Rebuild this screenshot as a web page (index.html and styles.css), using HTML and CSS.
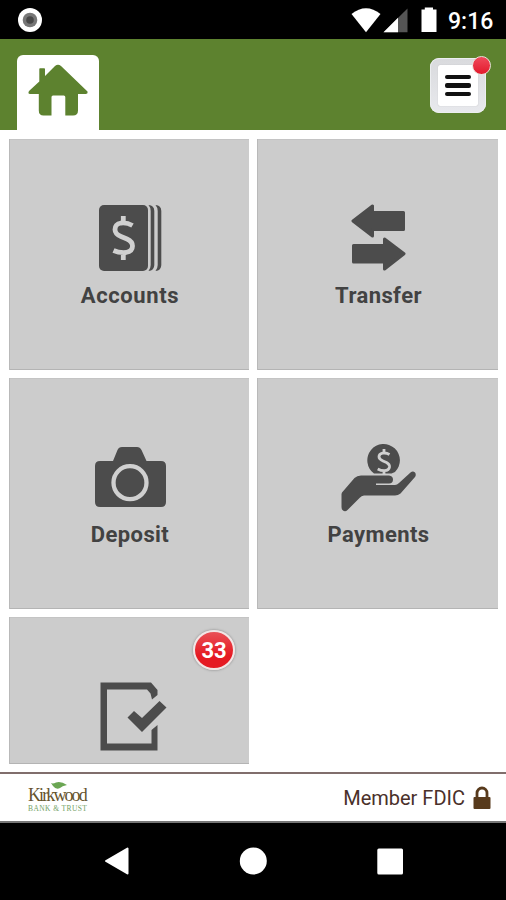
FILE: index.html
```html
<!DOCTYPE html>
<html lang="en">
<head>
<meta charset="utf-8">
<title>Kirkwood Bank &amp; Trust</title>
<link rel="stylesheet" href="styles.css">
</head>
<body>
<div class="status">
  <svg class="record" width="26" height="26" viewBox="0 0 26 26"><circle cx="13" cy="13" r="12" fill="#fff"/><circle cx="13" cy="13" r="7.3" fill="#777"/><circle cx="13" cy="13" r="3.8" fill="#484848"/></svg>
  <svg class="signals" width="90" height="30" viewBox="350 5 90 30">
    <path d="M351.5 14Q366 2.500 380.500 14L366 32.300Z" fill="#fff"/>
    <path d="M383.500 32.300L407.500 8.500V32.300Z" fill="#555"/>
    <path d="M383.500 32.300L398 17.800V32.300Z" fill="#fff"/>
    <path d="M421.500 9.500H424.800V7.500H433V9.500H436.500V32H421.500Z" fill="#fff"/>
  </svg>
  <span class="time">9:16</span>
</div>
<header class="header">
  <div class="home-tab">
    <svg width="82" height="75" viewBox="17 55 82 75"><path d="M29 91L39.300 81.500V69Q39.300 68.200 40 68.200H44.200Q45 68.200 45 69V76L55 66Q58 63.300 61 66L87.500 91.500Q88 94 85.500 94H78V110.500Q78 115.500 73 115.500H65.300V97Q65.300 95.500 63.800 95.500H53Q51.500 95.500 51.500 97V115.500H43.500Q38.800 115.500 38.800 110.500V94H30Q27.500 94 29 91Z" fill="#5d822f"/></svg>
  </div>
  <button class="menu" aria-label="Menu">
    <span class="menu-page"><i></i><i></i><i></i></span>
    <span class="dot"></span>
  </button>
</header>
<main class="grid">
  <section class="tile">
    <svg width="80" height="76" viewBox="90 199 80 76">
      <rect x="99" y="205" width="49" height="66" rx="5" fill="#4c4c4c"/>
      <path d="M148.500 205Q154.300 205.500 154.300 211V265Q154.300 270.500 148.500 271Q150.700 268.500 150.700 265V211Q150.700 207.500 148.500 205ZM155.500 205Q161.300 205.500 161.300 211V265Q161.300 270.500 155.500 271Q157.700 268.500 157.700 265V211Q157.700 207.500 155.500 205Z" fill="#4c4c4c"/>
      <path d="M132.500 225.500Q127 222.300 121 223Q115 224 115 229.500Q115 234 121 236.500L127 239Q132.500 241.500 132.500 246Q132.500 251.500 126 252.500Q119 253 113.500 250.500M123.300 216V224M123.300 252V260" fill="none" stroke="#d0d0d0" stroke-width="4.800"/>
    </svg>
    <span class="label accounts">Accounts</span>
  </section>
  <section class="tile">
    <svg width="80" height="76" viewBox="338 199 80 76">
      <path d="M353 221L372.500 206V212.500H403.500V229.500H372.500V236L353 221Z M353.500 245.500H384.500V239L404 253.700L384.500 269V262H353.500Z" fill="#4c4c4c" stroke="#4c4c4c" stroke-width="3" stroke-linejoin="round"/>
    </svg>
    <span class="label">Transfer</span>
  </section>
  <section class="tile">
    <svg width="80" height="76" viewBox="90 438 80 76">
      <path d="M100 461H113L117.500 450Q118.700 447 122 447H137Q140 447 141.500 450L146.500 461H161Q166 461 166 466V502Q166 507 161 507H100Q95 507 95 502V466Q95 461 100 461Z" fill="#4c4c4c"/>
      <circle cx="130" cy="482.700" r="16.500" fill="none" stroke="#d0d0d0" stroke-width="4.300"/>
    </svg>
    <span class="label">Deposit</span>
  </section>
  <section class="tile">
    <svg width="80" height="76" viewBox="338 437 80 76">
      <path d="M374 472.500A16.300 16.300 0 1 1 395 471L391.500 472.500Z" fill="#4c4c4c"/>
      <path d="M389.500 453.500Q386 451.500 382.500 452.200Q379 453 379 455.800Q379 458.300 383 460L386.500 461.500Q389.800 463.300 389.500 466Q389 469.500 384.500 469.700Q381 469.800 377.700 468M384 448V453M384 469V473.500" fill="none" stroke="#d0d0d0" stroke-width="2.800"/>
      <path d="M342 491.500L354.500 477Q357 474.500 361 474.500H389Q393 475 393 478.500Q393 482.500 389 482.500H376V484H395Q397 484 399 482L410.500 471.500Q413 469.500 415 471.500Q416.500 473.500 415 476L400.500 492.500Q398 494.500 395 494.500H364Q361.500 494.500 359.500 497L347.500 509Q345 511.500 342.500 509Q341.500 508 341.500 506V493Z" fill="#4c4c4c"/>
    </svg>
    <span class="label">Payments</span>
  </section>
  <section class="tile">
    <svg width="80" height="76" viewBox="90 677 80 76">
      <path d="M100.500 682.500H151L157.500 690V695L152 699.500L150.500 693.500L147 689.500H107V743.500H151.500V730L157.500 725V750.500H100.500Z" fill="#4c4c4c"/>
      <path d="M127.500 717.500L134 711L142 718L159.500 701L166.500 707.500L142 732Z" fill="#4c4c4c"/>
    </svg>
    <span class="badge">33</span>
  </section>
</main>
<footer class="footer">
  <div class="brand">
    <svg class="leaf" width="18" height="8" viewBox="0 0 18 8"><path d="M1 1Q3 2 6 .5Q11-1 17 3Q12 4 10 6Q6 8 3 4Z" fill="#6ba653"/></svg>
    <div class="brand-name">Kirkwood</div>
    <div class="brand-sub">BANK &amp; TRUST</div>
  </div>
  <div class="fdic">Member FDIC
    <svg width="18" height="24" viewBox="0 0 18 24"><path d="M4 12V7A5 5 0 0 1 14 7V12" fill="none" stroke="#583a1c" stroke-width="2.800"/><rect x=".5" y="11" width="17" height="12" rx="1" fill="#583a1c"/></svg>
  </div>
</footer>
<nav class="nav">
  <svg width="506" height="77" viewBox="0 823 506 77" fill="#fff"><path d="M106 861L127.500 848.500V873.500Z" stroke="#fff" stroke-width="2" stroke-linejoin="round"/><circle cx="253.300" cy="861" r="13.500"/><rect x="377.300" y="848.500" width="25.700" height="26" rx="1.500"/></svg>
</nav>
</body>
</html>
```

FILE: styles.css
```css
* { box-sizing: border-box; }
body {
  margin: 0;
  width: 506px;
  height: 900px;
  overflow: hidden;
  display: flex;
  flex-direction: column;
  background: #fff;
  font-family: Roboto, "Liberation Sans", sans-serif;
}
svg { display: block; flex: none; }
.status {
  flex: none;
  height: 39px;
  display: flex;
  align-items: center;
  padding: 0 12px 0 17px;
  background: #000;
  color: #fff;
}
.signals { margin-left: auto; }
.time {
  width: 46px;
  margin-left: 8px;
  padding-top: 4px;
  font-size: 23px;
  line-height: 30px;
  font-weight: 500;
  white-space: nowrap;
}
.header {
  flex: none;
  height: 91px;
  display: flex;
  justify-content: space-between;
  align-items: flex-start;
  padding: 16px 20px 0 17px;
  background: #5d822f;
}
.home-tab {
  width: 82px;
  height: 75px;
  border-radius: 6px 6px 0 0;
  background: #fff;
}
.menu {
  position: relative;
  width: 56px;
  height: 55px;
  margin: 3px 0 0;
  padding: 7px 8px;
  border: 0;
  border-radius: 9px;
  background: linear-gradient(#d9dadd, #e8e9ed);
  box-shadow: inset 0 0 0 1px #eceef0;
}
.menu-page {
  height: 41px;
  display: flex;
  flex-direction: column;
  justify-content: center;
  align-items: center;
  gap: 4px;
  border-radius: 2px;
  background: #fff;
  box-shadow: 0 0 1px #aaa;
}
.menu-page i {
  width: 26px;
  height: 4.500px;
  border-radius: 2px;
  background: #111;
}
.dot {
  position: absolute;
  top: -2px;
  right: -5px;
  width: 19px;
  height: 19px;
  border: 1.500px solid #eadfd8;
  border-radius: 50%;
  background: linear-gradient(#f04a5b, #e21a2c);
}
.grid {
  flex: none;
  height: 642px;
  display: grid;
  grid-template-columns: 240px 241px;
  grid-template-rows: 231px 231px 147px;
  gap: 8px;
  padding: 9px 8px 0 9px;
}
.tile {
  position: relative;
  overflow: hidden;
  display: flex;
  flex-direction: column;
  align-items: center;
  gap: 8px;
  padding-top: 60px;
  background: #ccc;
  box-shadow: inset 1px 0 #b9b9b9, inset 0 -1px #b4b4b4, inset 0 1px #c4c4c4;
}
.tile svg { margin-left: 1px; }
.label {
  margin-left: 2px;
  color: #424242;
  font-size: 22px;
  line-height: 26px;
  font-weight: 700;
  letter-spacing: .4px;
}
.accounts { letter-spacing: .6px; }
.badge {
  position: absolute;
  top: 13px;
  right: 14px;
  width: 42px;
  height: 40px;
  border: 2px solid #f2e6e6;
  border-radius: 50%;
  background: linear-gradient(#e95056, #e51a23 65%);
  box-shadow: 0 0 2px 1px #aaa;
  color: #fff;
  font-size: 22px;
  line-height: 38px;
  font-weight: 700;
  text-align: center;
}
.footer {
  flex: none;
  height: 51px;
  display: flex;
  justify-content: space-between;
  padding: 0 15px 0 28px;
  border-top: 2px solid #806e6c;
  border-bottom: 2px solid #777;
}
.brand {
  position: relative;
  width: 59px;
  padding-top: 11px;
  font-family: "Liberation Serif", serif;
  white-space: nowrap;
}
.leaf { position: absolute; left: 22px; top: 8px; }
.brand-name {
  color: #66532d;
  font-size: 18px;
  line-height: 20px;
  letter-spacing: -1.900px;
}
.brand-sub {
  color: #72a265;
  font-size: 7.500px;
  line-height: 8px;
  letter-spacing: .4px;
}
.fdic {
  display: flex;
  align-items: center;
  gap: 8px;
  color: #4a302a;
  font-size: 20px;
}
.nav { flex: none; height: 77px; background: #000; }
```
